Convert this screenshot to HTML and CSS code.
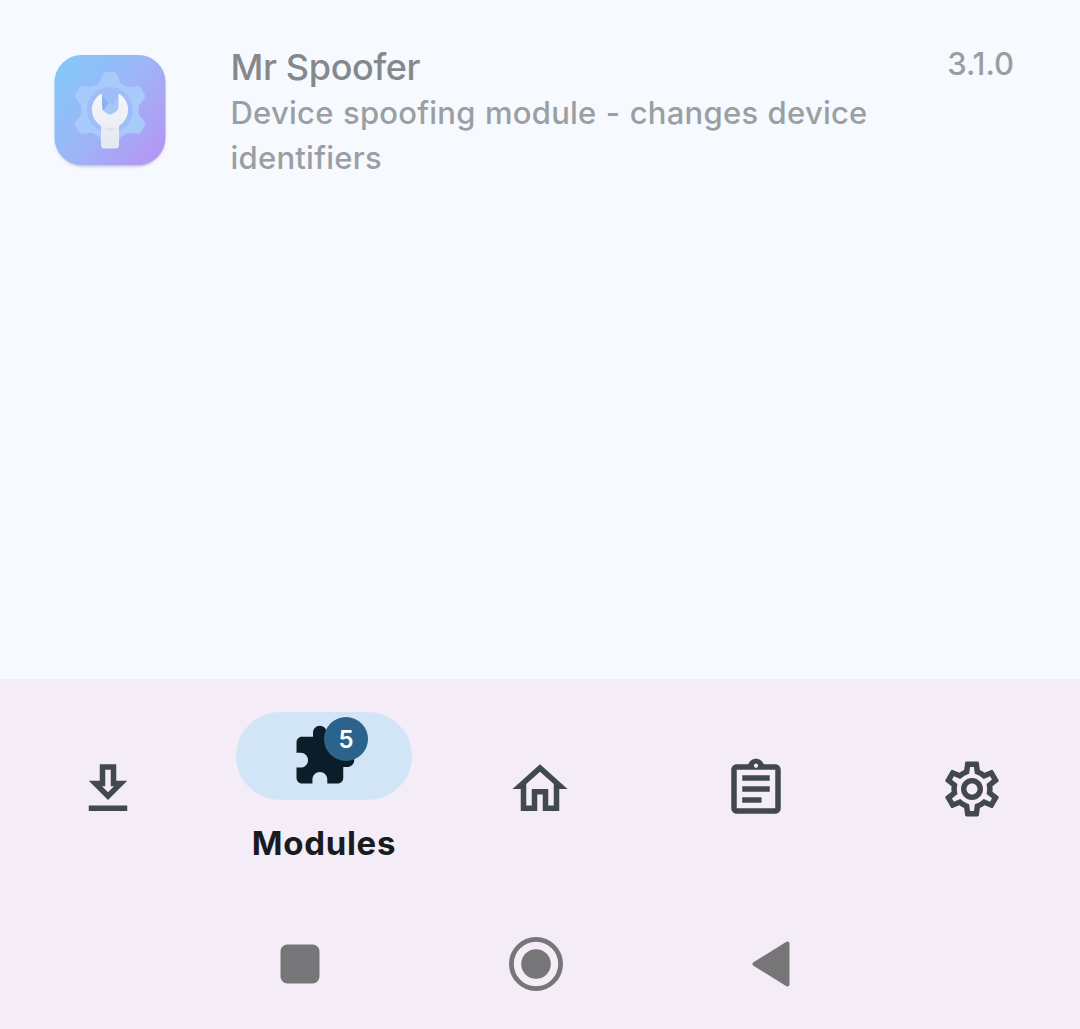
FILE: index.html
```html
<!DOCTYPE html>
<html lang="en">
<head>
<meta charset="utf-8">
<title>Modules</title>
<link rel="stylesheet" href="styles.css">
</head>
<body>
<main class="list">
  <article class="module">
    <svg class="module-icon" viewBox="0 0 120 120">
      <defs>
        <linearGradient id="tile" x1="0" y1="0.1" x2="1" y2="0.9">
          <stop offset="0" stop-color="#83c8fa"/>
          <stop offset="0.5" stop-color="#9db5f7"/>
          <stop offset="1" stop-color="#b694f4"/>
        </linearGradient>
        <linearGradient id="steel" x1="0" y1="0" x2="0" y2="1">
          <stop offset="0" stop-color="#f4f6fb"/>
          <stop offset="1" stop-color="#e4e8ef"/>
        </linearGradient>
        <filter id="soft" x="-20%" y="-20%" width="140%" height="140%"><feGaussianBlur stdDeviation="1.4"/></filter>
        <path id="tooth" d="M47 36L50.500 33L53.800 25Q54.500 23 56.500 23H63.500Q65.500 23 66.200 25L69.500 33L73 36Z"/>
      </defs>
      <rect x="5.5" y="7" width="109" height="109.5" rx="27" fill="#8f94b8" opacity=".6" filter="url(#soft)"/>
      <rect x="4.5" y="5" width="111" height="110" rx="27" fill="url(#tile)"/>
      <g fill="#a9cbfb" stroke="#a9cbfb" stroke-width="2" stroke-linejoin="round">
        <circle cx="60" cy="60" r="27.500"/>
        <use href="#tooth"/>
        <use href="#tooth" transform="rotate(60 60 60)"/>
        <use href="#tooth" transform="rotate(120 60 60)"/>
        <use href="#tooth" transform="rotate(180 60 60)"/>
        <use href="#tooth" transform="rotate(240 60 60)"/>
        <use href="#tooth" transform="rotate(300 60 60)"/>
      </g>
      <circle cx="60" cy="60" r="23" fill="#9fbef8"/>
      <path d="M52 45l10 10 6-8v18l-8 4-8-6z" fill="#a8c6fa"/>
      <path d="M52 45l7 8-7 9z" fill="#8fb2f3"/>
      <path d="M51.500 43.800Q51 43.600 50 44.200A19 19 0 0 0 51 76V95Q51 98.500 54.500 98.500H65.500Q69 98.500 69 95V76A19 19 0 0 0 70 44.200Q68.500 43.400 68.500 45V57Q68.500 60 65.500 62L62 64Q60 65 58 64L54.500 62Q52 60 52 57V45Z" fill="url(#steel)"/>
      <path d="M51 76q9 5 18 0l-7 4q-2 1-4 0z" fill="#d9dfe9"/>
    </svg>
    <div class="module-text">
      <h1 class="module-name">Mr Spoofer</h1>
      <p class="module-desc">Device spoofing module - changes device identifiers</p>
    </div>
    <span class="module-version">3.1.0</span>
  </article>
</main>
<nav class="tabs">
  <a class="tab">
    <svg class="icon" viewBox="0 0 24 24"><path d="M19 9h-4V3H9v6H5l7 7 7-7zm-8 2V5h2v6h1.170L12 13.170 9.830 11H11zm-6 7h14v2H5z"/></svg>
  </a>
  <a class="tab tab-active">
    <span class="pill">
      <svg class="icon" viewBox="0 0 24 24"><path d="M20.500 11H19V7c0-1.100-.9-2-2-2h-4V3.500C13 2.120 11.880 1 10.500 1S8 2.120 8 3.500V5H4c-1.100 0-1.990.9-1.990 2v3.800H3.500c1.490 0 2.700 1.210 2.700 2.700s-1.210 2.700-2.700 2.700H2V20c0 1.100.9 2 2 2h3.800v-1.500c0-1.490 1.210-2.700 2.700-2.700 1.490 0 2.700 1.210 2.700 2.700V22H17c1.100 0 2-.9 2-2v-4h1.500c1.380 0 2.500-1.120 2.500-2.500S21.880 11 20.500 11z"/></svg>
      <span class="badge">5</span>
    </span>
    <span class="tab-label">Modules</span>
  </a>
  <a class="tab">
    <svg class="icon" viewBox="0 0 24 24"><path d="M12 5.690l5 4.500V18h-2v-6H9v6H7v-7.810l5-4.500M12 3L2 12h3v8h6v-6h2v6h6v-8h3L12 3z"/></svg>
  </a>
  <a class="tab">
    <svg class="icon" viewBox="0 0 24 24"><path fill-rule="evenodd" d="M7 15h7v2H7zM7 11h10v2H7zM7 7h10v2H7zM19 3h-4.180C14.400 1.840 13.300 1 12 1s-2.400.84-2.820 2H5c-1.100 0-2 .9-2 2v14c0 1.100.9 2 2 2h14c1.100 0 2-.9 2-2V5c0-1.100-.9-2-2-2zM12 2.750c.41 0 .75.34.75.75s-.34.75-.75.75-.75-.34-.75-.75.34-.75.75-.75zM19 19H5V5h14z"/></svg>
  </a>
  <a class="tab">
    <svg class="icon" viewBox="0 0 24 24"><path d="M19.430 12.980c.04-.32.07-.64.07-.98 0-.34-.03-.66-.07-.98l2.110-1.650c.19-.15.24-.42.12-.64l-2-3.460c-.09-.16-.26-.25-.44-.25-.06 0-.12.01-.17.03l-2.490 1c-.52-.4-1.080-.73-1.690-.98l-.38-2.650C14.460 2.180 14.250 2 14 2h-4c-.25 0-.46.18-.49.42l-.38 2.650c-.61.25-1.170.59-1.690.98l-2.490-1c-.06-.02-.12-.03-.18-.03-.17 0-.34.09-.43.25l-2 3.460c-.13.22-.07.49.12.64l2.110 1.650c-.04.32-.07.65-.07.98 0 .33.03.66.07.98l-2.110 1.650c-.19.15-.24.42-.12.64l2 3.460c.09.16.26.25.44.25.06 0 .12-.01.17-.03l2.490-1c.52.4 1.080.73 1.690.98l.38 2.650c.03.24.24.42.49.42h4c.25 0 .46-.18.49-.42l.38-2.650c.61-.25 1.170-.59 1.690-.98l2.490 1c.06.02.12.03.18.03.17 0 .34-.09.43-.25l2-3.460c.12-.22.07-.49-.12-.64l-2.110-1.650zm-1.980-1.710c.04.31.05.52.05.73 0 .21-.02.43-.05.73l-.14 1.130.89.7 1.080.84-.7 1.210-1.270-.51-1.040-.42-.9.68c-.43.32-.84.56-1.250.73l-1.060.43-.16 1.130-.2 1.350h-1.400l-.19-1.350-.16-1.130-1.060-.43c-.43-.18-.83-.41-1.230-.71l-.91-.7-1.060.43-1.270.51-.7-1.210 1.080-.84.89-.7-.14-1.130c-.03-.31-.05-.54-.05-.74s.02-.43.05-.73l.14-1.130-.89-.7-1.080-.84.7-1.210 1.270.51 1.040.42.9-.68c.43-.32.84-.56 1.250-.73l1.060-.43.16-1.130.2-1.350h1.390l.19 1.350.16 1.130 1.060.43c.43.18.83.41 1.230.71l.91.7 1.060-.43 1.270-.51.7 1.210-1.070.85-.89.7.14 1.130zM12 8c-2.210 0-4 1.790-4 4s1.790 4 4 4 4-1.790 4-4-1.790-4-4-4zm0 6c-1.100 0-2-.9-2-2s.9-2 2-2 2 .9 2 2-.9 2-2 2z"/></svg>
  </a>
</nav>
<footer class="system-nav">
  <svg class="key key-recents" viewBox="0 0 40 40"><rect x=".5" y=".5" width="39" height="39" rx="7"/></svg>
  <svg class="key key-home" viewBox="0 0 54 54"><circle cx="27" cy="27" r="24.600" fill="none" stroke="#767577" stroke-width="4.800"/><circle cx="27" cy="27" r="14.800"/></svg>
  <svg class="key key-back" viewBox="0 0 38 46"><path d="M2.500 23L35.500 2.500V43.500Z" stroke="#767577" stroke-width="4" stroke-linejoin="round"/></svg>
</footer>
</body>
</html>
```
FILE: styles.css
```css
* { box-sizing: border-box; }

body {
  margin: 0;
  height: 1029px;
  display: flex;
  flex-direction: column;
  overflow: hidden;
  background: #f6faff;
  font-family: Inter, "Noto Sans", sans-serif;
}

.list {
  height: 679px;
  padding: 43px 66px 0 50px;
}

.module {
  display: flex;
  align-items: flex-start;
}

.module-icon {
  width: 120px;
  height: 120px;
  margin-top: 7px;
  flex: none;
}

.module-text {
  width: 680px;
  margin-left: 60.5px;
}

.module-name {
  margin: 0;
  padding-top: 1px;
  font-size: 36px;
  font-weight: 500;
  line-height: 46px;
  letter-spacing: -0.35px;
  color: #85888c;
}

.module-desc {
  margin: 0;
  font-size: 31px;
  font-weight: 450;
  line-height: 45px;
  letter-spacing: 0.24px;
  word-spacing: 0.8px;
  color: #9b9fa4;
}

.module-version {
  margin-left: auto;
  font-size: 31px;
  font-weight: 500;
  line-height: 41px;
  color: #999da2;
}

.tabs {
  height: 220px;
  display: grid;
  grid-template-columns: repeat(5, 1fr);
  background: #f4ecf7;
}

.tab {
  display: flex;
  flex-direction: column;
  align-items: center;
  padding-top: 77px;
  color: #42494e;
}

.tab-active {
  padding-top: 33px;
  color: #0a1d29;
}

.icon {
  width: 66px;
  height: 66px;
  fill: currentColor;
  display: block;
}

.pill {
  position: relative;
  width: 176px;
  height: 88px;
  padding-top: 11px;
  display: flex;
  justify-content: center;
  border-radius: 44px;
  background: #d2e5f6;
}

.badge {
  position: absolute;
  left: 88px;
  top: 5px;
  width: 44px;
  height: 44px;
  border-radius: 50%;
  background: #2a638c;
  color: #fff;
  font-size: 24px;
  font-weight: 600;
  line-height: 45px;
  text-align: center;
}

.tab-label {
  margin-top: 21px;
  font-size: 33px;
  font-weight: 650;
  line-height: 44px;
  letter-spacing: 0.7px;
  color: #1a1b1e;
}

.system-nav {
  height: 130px;
  padding: 0 290px 0 280px;
  display: flex;
  align-items: center;
  justify-content: space-between;
  background: #f4ecf7;
}

.key { fill: #767577; }
.key-recents { width: 40px; height: 40px; }
.key-home { width: 54px; height: 54px; }
.key-back { width: 38px; height: 46px; }
```
